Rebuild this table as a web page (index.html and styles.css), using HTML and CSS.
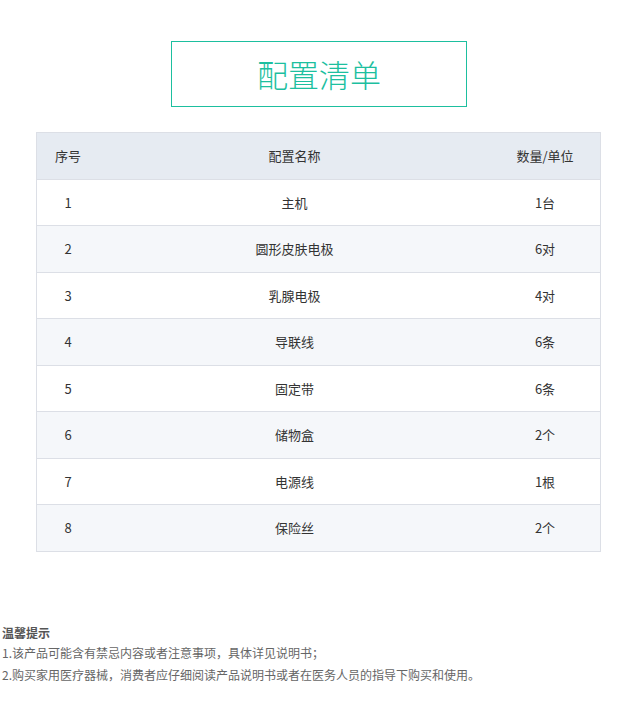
FILE: index.html
```html
<!DOCTYPE html>
<html lang="zh-CN">
<head>
<meta charset="utf-8">
<title>配置清单</title>
<link rel="stylesheet" href="styles.css">
</head>
<body>
<div class="page">
  <div class="title-wrap">
    <div class="title">配置清单</div>
  </div>
  <table class="list">
    <thead>
      <tr><th class="c1">序号</th><th class="c2">配置名称</th><th class="c3">数量/单位</th></tr>
    </thead>
    <tbody>
      <tr><td>1</td><td>主机</td><td>1台</td></tr>
      <tr><td>2</td><td>圆形皮肤电极</td><td>6对</td></tr>
      <tr><td>3</td><td>乳腺电极</td><td>4对</td></tr>
      <tr><td>4</td><td>导联线</td><td>6条</td></tr>
      <tr><td>5</td><td>固定带</td><td>6条</td></tr>
      <tr><td>6</td><td>储物盒</td><td>2个</td></tr>
      <tr><td>7</td><td>电源线</td><td>1根</td></tr>
      <tr><td>8</td><td>保险丝</td><td>2个</td></tr>
    </tbody>
  </table>
  <div class="tips">
    <div class="tips-title">温馨提示</div>
    <p>1.该产品可能含有禁忌内容或者注意事项，具体详见说明书；</p>
    <p>2.购买家用医疗器械，消费者应仔细阅读产品说明书或者在医务人员的指导下购买和使用。</p>
  </div>
</div>
</body>
</html>
```
FILE: styles.css
```css
html, body {
  margin: 0;
  padding: 0;
  background: #ffffff;
}
body {
  font-family: "Noto Sans CJK SC", "Microsoft YaHei", sans-serif;
  color: #333;
}
.page {
  width: 632px;
  padding-top: 41px;
}
.title-wrap {
  display: flex;
  justify-content: flex-start;
  padding-left: 171px;
}
.title {
  width: 294px;
  height: 64px;
  border: 1px solid #1dbf9f;
  color: #1dbf9f;
  font-size: 31px;
  font-weight: 300;
  line-height: 64px;
  text-align: center;
}
.list {
  margin-top: 25px;
  margin-left: 36px;
  width: 565px;
  border-collapse: collapse;
  font-size: 13px;
  color: #333;
}
.list th, .list td {
  border-top: 1px solid #dcdfe6;
  border-bottom: 1px solid #dcdfe6;
  height: 45.5px;
  padding: 0;
  text-align: center;
  font-weight: normal;
}
.list th:first-child, .list td:first-child { border-left: 1px solid #dcdfe6; }
.list th:last-child, .list td:last-child { border-right: 1px solid #dcdfe6; }
.list thead tr { background: #e6ebf2; }
.list tbody tr:nth-child(even) { background: #f5f7fa; }
.c1 { width: 62px; }
.c3 { width: 110px; }
.tips {
  margin-top: 71px;
  padding-left: 2px;
  font-size: 12px;
  color: #666;
}
.tips-title {
  font-weight: bold;
  color: #555;
  line-height: 19px;
}
.tips p {
  margin: 0;
  line-height: 22px;
}
```
